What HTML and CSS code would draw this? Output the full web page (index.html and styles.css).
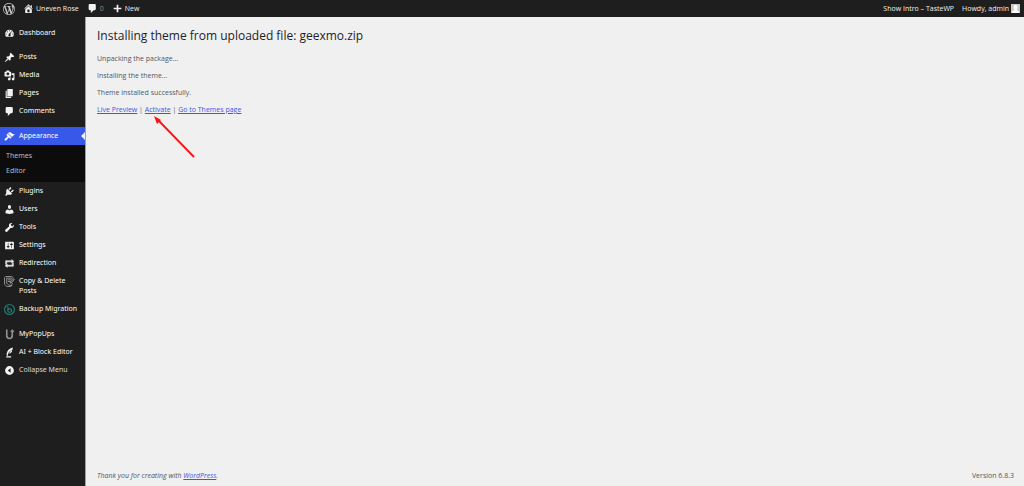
FILE: index.html
```
<!DOCTYPE html>
<html lang="en">
<head>
    <meta charset="UTF-8">
    <meta name="viewport" content="width=device-width, initial-scale=1.0">
    <title>Installing theme - Uneven Rose</title>
    <link rel="stylesheet" href="styles.css">
</head>
<body>

<header class="adminbar">
    <a class="bar-item" href="#" aria-label="About WordPress"><svg class="icon bar-logo" viewBox="0 0 20 20"><path d="M20 10c0-5.51-4.49-10-10-10C4.48 0 0 4.49 0 10c0 5.52 4.48 10 10 10 5.51 0 10-4.48 10-10zM7.78 15.37L4.37 6.22c.55-.02 1.17-.08 1.17-.08.5-.06.44-1.13-.06-1.11 0 0-1.45.11-2.37.11-.18 0-.37 0-.58-.01C4.12 2.69 6.87 1.11 10 1.11c2.33 0 4.45.87 6.05 2.34-.68-.11-1.65.39-1.65 1.58 0 .74.45 1.36.9 2.1.35.61.55 1.36.55 2.46 0 1.49-1.4 5-1.4 5l-3.03-8.37c.54-.02.82-.17.82-.17.5-.05.44-1.25-.06-1.22 0 0-1.44.12-2.38.12-.87 0-2.33-.12-2.33-.12-.5-.03-.56 1.2-.06 1.22l.92.08 1.26 3.41zM17.41 10c.24-.64.74-1.87.43-4.25.7 1.29 1.05 2.71 1.05 4.25 0 3.29-1.73 6.24-4.4 7.78.97-2.59 1.94-5.2 2.92-7.78zM6.1 18.09C3.12 16.65 1.11 13.53 1.11 10c0-1.3.23-2.48.72-3.59C3.25 10.3 4.67 14.2 6.1 18.09zm4.03-6.63l2.58 6.98c-.86.29-1.76.45-2.71.45-.79 0-1.57-.11-2.29-.33.81-2.38 1.62-4.74 2.42-7.1z"/></svg></a>
    <a class="bar-item" href="#"><svg class="icon" viewBox="0 0 20 20"><path d="M16 8.5l1.53 1.53-1.06 1.06L10 4.6l-6.47 6.47-1.06-1.06L10 2.47l4 4V4h2v4.5zm-6-2.46l6 5.99V18H4v-5.97zM12 17v-5H8v5h4z"/></svg>Uneven Rose</a>
    <a class="bar-item bar-count" href="#"><svg class="icon" viewBox="0 0 20 20"><path d="M5 2h9c1.1 0 2 .9 2 2v7c0 1.1-.9 2-2 2h-2l-5 5v-5H5c-1.1 0-2-.9-2-2V4c0-1.1.9-2 2-2z"/></svg>0</a>
    <a class="bar-item" href="#"><svg class="icon" viewBox="0 0 20 20"><path d="M17 8.5v3h-5.500v5.500h-3v-5.500H3v-3h5.500V3h3v5.500z"/></svg>New</a>
    <div class="bar-right">
        <a class="bar-item" href="#">Show Intro – TasteWP</a>
        <a class="bar-item" href="#">Howdy, admin
            <svg class="avatar" viewBox="0 0 18 18"><rect width="18" height="18" fill="#c8c8c8"/><path fill="#fff" d="M9 2c3 0 4 2 4 4.500S11.500 11 11 11.500c0 1.500 4 1.500 5 4V18H2v-2.500c1-2.500 5-2.500 5-4C6.500 11 5 9 5 6.500S6 2 9 2z"/></svg>
        </a>
    </div>
</header>

<div class="wrap">
    <nav class="sidebar">
        <ul class="menu">
            <li><a href="#"><svg class="icon" viewBox="0 0 20 20"><path fill-rule="evenodd" d="M3.760 16h12.480c1.100-1.370 1.760-3.110 1.760-5 0-4.420-3.580-8-8-8s-8 3.580-8 8c0 1.890.66 3.630 1.760 5zM10 4c.55 0 1 .45 1 1s-.45 1-1 1-1-.45-1-1 .45-1 1-1zM6 6c.55 0 1 .45 1 1s-.45 1-1 1-1-.45-1-1 .45-1 1-1zm8 0c.55 0 1 .45 1 1s-.45 1-1 1-1-.45-1-1 .45-1 1-1zm-5.370 5.550L12 7v6c0 1.100-.9 2-2 2s-2-.9-2-2c0-.57.24-1.080.63-1.450zM4 10c.55 0 1 .45 1 1s-.45 1-1 1-1-.45-1-1 .45-1 1-1zm12 0c.55 0 1 .45 1 1s-.45 1-1 1-1-.45-1-1 .45-1 1-1z"/></svg>Dashboard</a></li>
            <li class="group-first"><a href="#"><svg class="icon" viewBox="0 0 20 20"><path d="M10.440 3.020l1.820-1.820 6.360 6.350-1.830 1.820c-1.050-.68-2.480-.57-3.410.36l-.75.75c-.92.93-1.040 2.350-.35 3.410l-1.830 1.820-2.410-2.410-2.800 2.790c-.42.42-3.380 2.710-3.800 2.290s1.860-3.390 2.280-3.810l2.790-2.790L4.100 9.360l1.830-1.820c1.050.69 2.480.57 3.400-.36l.75-.75c.93-.92 1.050-2.350.36-3.410z"/></svg>Posts</a></li>
            <li><a href="#"><svg class="icon" viewBox="0 0 20 20"><path fill-rule="evenodd" d="M13 11V4c0-.55-.45-1-1-1h-1.670L9 1H5L3.670 3H2c-.55 0-1 .45-1 1v7c0 .55.45 1 1 1h10c.55 0 1-.45 1-1zM7 4.500c1.380 0 2.500 1.120 2.500 2.500S8.380 9.500 7 9.500 4.500 8.380 4.500 7 5.620 4.500 7 4.500zM14 6h5v10.500c0 1.380-1.120 2.500-2.500 2.500S14 17.880 14 16.500s1.120-2.500 2.500-2.500c.17 0 .34.02.5.05V9h-3V6zm-4 8.050V13h2v3.500c0 1.380-1.120 2.500-2.500 2.500S7 17.880 7 16.500 8.120 14 9.500 14c.17 0 .34.02.5.05z"/></svg>Media</a></li>
            <li><a href="#"><svg class="icon" viewBox="0 0 20 20"><path d="M6 15V2h10v13H6zm-1 1h8v2H3V5h2v11z"/></svg>Pages</a></li>
            <li><a href="#"><svg class="icon" viewBox="0 0 20 20"><path d="M5 2h9c1.100 0 2 .9 2 2v7c0 1.100-.9 2-2 2h-2l-5 5v-5H5c-1.100 0-2-.9-2-2V4c0-1.100.9-2 2-2z"/></svg>Comments</a></li>
            <li class="group-next">
                <a class="current" href="#"><svg class="icon" viewBox="0 0 20 20"><path d="M14.480 11.060L7.410 3.990l1.500-1.500c.5-.56 2.300-.47 3.510.32 1.210.8 1.430 1.280 2.910 2.100 1.180.64 2.450 1.260 4.450.85zm-.71.71L6.700 4.700 4.930 6.470c-.39.39-.39 1.020 0 1.410l1.060 1.060c.39.39.39 1.030 0 1.420-.6.6-1.430 1.110-2.210 1.690-.35.26-.7.53-1.010.84C1.430 14.230.4 16.080 1.400 17.070c.99 1 2.840-.03 4.180-1.360.31-.31.58-.66.85-1.020.57-.78 1.080-1.610 1.690-2.210.39-.39 1.020-.39 1.410 0l1.060 1.060c.39.39 1.020.39 1.410 0z"/></svg>Appearance</a>
                <ul class="submenu">
                    <li><a href="#">Themes</a></li>
                    <li><a href="#">Editor</a></li>
                </ul>
            </li>
            <li><a href="#"><svg class="icon" viewBox="0 0 20 20"><path d="M13.110 4.360L9.870 7.600 8 5.730l3.240-3.240c.35-.34 1.050-.2 1.560.32.52.51.66 1.210.31 1.550zm-8 1.770l.91-1.120 9.010 9.010-1.190.84c-.71.71-2.630 1.160-3.820 1.160H6.140L4.900 17.260c-.59.59-1.540.59-2.120 0-.59-.58-.59-1.530 0-2.120l1.240-1.240v-3.880c0-1.130.4-3.190 1.090-3.890zm7.260 3.970l3.240-3.240c.34-.35 1.040-.21 1.550.31.52.51.66 1.210.31 1.550l-3.240 3.250z"/></svg>Plugins</a></li>
            <li><a href="#"><svg class="icon" viewBox="0 0 20 20"><path d="M10 9.250c-2.270 0-2.730-3.440-2.730-3.440C7 4.020 7.820 2 9.970 2c2.160 0 2.980 2.020 2.710 3.810 0 0-.41 3.440-2.680 3.440zm0 2.570L12.720 10c2.390 0 4.520 2.330 4.520 4.530v2.490s-3.650 1.130-7.240 1.130c-3.650 0-7.240-1.130-7.240-1.130v-2.490c0-2.250 1.940-4.480 4.470-4.480z"/></svg>Users</a></li>
            <li><a href="#"><svg class="icon" viewBox="0 0 20 20"><path d="M16.680 9.770c-1.340 1.340-3.300 1.670-4.950.99l-5.410 6.520c-.99.99-2.590.99-3.580 0s-.99-2.590 0-3.570l6.520-5.420c-.68-1.650-.35-3.610.99-4.950 1.280-1.280 3.120-1.620 4.720-1.060l-2.890 2.890 2.820 2.820 2.860-2.870c.53 1.580.18 3.390-1.080 4.650z"/></svg>Tools</a></li>
            <li><a href="#"><svg class="icon" viewBox="0 0 20 20"><path fill-rule="evenodd" d="M18 16V4c0-.55-.45-1-1-1H3c-.55 0-1 .45-1 1v12c0 .55.45 1 1 1h14c.55 0 1-.45 1-1zM8 11h1c.55 0 1 .45 1 1s-.45 1-1 1H8v1.500c0 .28-.22.5-.5.5s-.5-.22-.5-.5V13H6c-.55 0-1-.45-1-1s.45-1 1-1h1V5.500c0-.28.22-.5.5-.5s.5.22.5.5V11zm5-2h-1c-.55 0-1-.45-1-1s.45-1 1-1h1V5.500c0-.28.22-.5.5-.5s.5.22.5.5V7h1c.55 0 1 .45 1 1s-.45 1-1 1h-1v5.500c0 .28-.22.5-.5.5s-.5-.22-.5-.5V9z"/></svg>Settings</a></li>
            <li><a href="#"><svg class="icon icon-bold" viewBox="0 0 20 20"><path d="M5 7v3l-2 1.500V5h11V3l4 3.010L14 9V7H5zm10 6v-3l2-1.500V15H6v2l-4-3.010L6 11v2h9z"/></svg>Redirection</a></li>
            <li><a href="#"><svg class="icon icon-copy" viewBox="0 0 20 20"><path d="M14 16v2l-2 1H5l-4-4V3l2-2h11l3 2M5 4h9l2 2M5 4v9l4 4h4l2-2v-2M7 7h7M7 10h5M11 13l1-3 6-5 1 1-5 6z"/></svg>Copy &amp; Delete Posts</a></li>
            <li><a href="#"><svg class="icon icon-backup" viewBox="0 0 20 20"><circle cx="10" cy="10" r="9"/><path d="M7 4v9c1 3 7 3 7-1s-5-4-7-1"/></svg>Backup Migration</a></li>
            <li class="group-next"><a href="#"><svg class="icon icon-popups" viewBox="0 0 20 20"><path d="M5 1v11c0 7 10 7 10 0V3"/><path d="M12 5l3-3 3 3" stroke-width="2"/></svg>MyPopUps</a></li>
            <li><a href="#"><svg class="icon" viewBox="0 0 20 20"><path d="M5 16C4 9 8 3 16 1c0 4-1 5-3 6h2c-1 3-3 5-6 5l4-6c-4 3-6 6-6 10zM4 17h9v2H4z"/></svg>AI + Block Editor</a></li>
            <li><button class="collapse" type="button"><svg class="icon" viewBox="0 0 20 20"><path fill-rule="evenodd" d="M10 2a8 8 0 1 1 0 16a8 8 0 1 1 0-16zM12 6l-5 4 5 4z"/></svg>Collapse Menu</button></li>
        </ul>
    </nav>

    <div class="content">
        <main>
            <h1>Installing theme from uploaded file: geexmo.zip</h1>
            <p>Unpacking the package…</p>
            <p>Installing the theme…</p>
            <p>Theme installed successfully.</p>
            <p class="actions"><a href="#">Live Preview</a> | <span class="activate"><a href="#">Activate</a><svg class="pointer" viewBox="0 0 42 44"><path d="M41 42L5 5" fill="none" stroke="#f11" stroke-width="1.800"/><path d="M1 1l7 4-4 4z" fill="#f11"/></svg></span> | <a href="#">Go to Themes page</a></p>
        </main>
        <footer>
            <em>Thank you for creating with <a href="#">WordPress</a>.</em>
            <span>Version 6.8.3</span>
        </footer>
    </div>
</div>

</body>
</html>
```
FILE: styles.css
```
* {
    box-sizing: border-box;
}
body {
    display: flex;
    flex-direction: column;
    min-height: 100vh;
    margin: 0;
    background: #f0f0f1;
    color: #50575e;
    font-family: "Open Sans", "Noto Sans", sans-serif;
    font-size: 7px;
    line-height: 10px;
}
ul {
    margin: 0;
    padding: 0;
    list-style: none;
}
a {
    color: #3858e9;
}
.icon {
    flex: none;
    width: 11px;
    height: 11px;
    fill: #f3f1f1;
}

/* top bar */
.adminbar {
    display: flex;
    align-items: center;
    gap: 8px;
    height: 17px;
    padding: 0 4px 0 3px;
    background: #1e1e1e;
}
.bar-item {
    display: flex;
    align-items: center;
    gap: 2px;
    color: #f0f0f1;
    text-decoration: none;
}
.bar-logo {
    width: 12px;
    height: 12px;
    fill: #c3c4c7;
}
.bar-count {
    color: #8c8f94;
}
.bar-right {
    display: flex;
    gap: 8px;
    margin-left: auto;
}
.avatar {
    width: 9px;
    height: 9px;
}

/* side menu */
.wrap {
    display: flex;
    flex: 1;
}
.sidebar {
    flex: none;
    width: 86px;
    padding-top: 7px;
    background: #1e1e1e;
    border-right: 1px solid #a0a0a0;
    font-family: "Noto Sans", "Open Sans", sans-serif;
}
.menu a, .collapse {
    display: flex;
    gap: 4px;
    padding: 4px 6px 4px 4px;
    color: #fff;
    text-decoration: none;
}
.menu .icon {
    margin-bottom: -1px;
}
.group-first {
    margin-top: 6px;
}
.group-next {
    margin-top: 7px;
}
.menu .current {
    position: relative;
    background: #3858e9;
}
.current::after {
    content: "";
    position: absolute;
    top: 5px;
    right: 0;
    border: 4px solid transparent;
    border-right-color: #f0f0f1;
    border-left: 0;
}
.submenu {
    padding: 3px 0 4px;
    background: #0c0c0c;
}
.submenu a {
    padding: 3px 6px 2px;
    color: #bcbcbc;
}
.collapse {
    width: 100%;
    border: 0;
    background: none;
    color: #dcdcde;
    font: inherit;
    text-align: left;
    cursor: pointer;
}
.icon-bold {
    stroke: #f3f1f1;
    stroke-width: 1;
}
.icon-copy {
    fill: none;
    stroke: #a7aaad;
    stroke-width: 1.5;
}
.icon-backup {
    fill: none;
    stroke: #1f8078;
    stroke-width: 2;
}
.icon-popups {
    fill: none;
    stroke: #8c8f94;
    stroke-width: 3;
}

/* page */
.content {
    display: flex;
    flex: 1;
    flex-direction: column;
    justify-content: space-between;
    padding: 11px 10px 5px 11px;
}
h1 {
    margin: 0 0 10px;
    color: #1d2327;
    font-size: 12px;
    font-weight: 400;
    line-height: 16px;
}
p {
    margin: 0 0 7px;
}
.activate {
    position: relative;
}
.pointer {
    position: absolute;
    top: 10px;
    left: 8px;
    width: 42px;
    height: 44px;
}
footer {
    display: flex;
    justify-content: space-between;
}
```
